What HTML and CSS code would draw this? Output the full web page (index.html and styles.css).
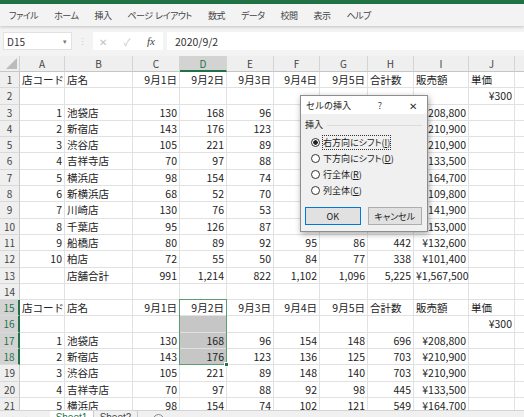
FILE: index.html
```html
<!DOCTYPE html>
<html lang="ja">
<head>
    <meta charset="UTF-8">
    <title>セルの挿入</title>
    <link rel="stylesheet" href="styles.css">
</head>
<body>
    <div class="excel">
        <div class="titlebar"></div>
        <nav class="tabs">
            <span>ファイル</span>
            <span>ホーム</span>
            <span>挿入</span>
            <span class="wide">ページ レイアウト</span>
            <span>数式</span>
            <span>データ</span>
            <span>校閲</span>
            <span>表示</span>
            <span>ヘルプ</span>
        </nav>

        <div class="formula">
            <div class="namebox"><span>D15</span><span class="caret">▾</span></div>
            <div class="grip">⋮</div>
            <div class="fxbox">
                <span class="off">✕</span>
                <span class="off">✓</span>
                <span class="fx">fx</span>
            </div>
            <div class="input">2020/9/2</div>
        </div>

        <div class="sheet" id="sheet"></div>

        <div class="sheetbar">
            <div class="nav"><span>◀</span><span>▶</span></div>
            <div class="tab active">Sheet1</div>
            <div class="tab">Sheet2</div>
            <div class="add"></div>
        </div>

        <div class="dialog">
            <div class="dlg-title">
                <span>セルの挿入</span>
                <span class="help">?</span>
                <span class="close">✕</span>
            </div>
            <div class="dlg-body">
                <div class="group-label">挿入</div>
                <ul class="options">
                    <li><span class="radio checked"></span><span class="focus">右方向にシフト(<u>I</u>)</span></li>
                    <li><span class="radio"></span><span>下方向にシフト(<u>D</u>)</span></li>
                    <li><span class="radio"></span><span>行全体(<u>R</u>)</span></li>
                    <li><span class="radio"></span><span>列全体(<u>C</u>)</span></li>
                </ul>
                <div class="buttons">
                    <button class="ok">OK</button>
                    <button class="cancel">キャンセル</button>
                </div>
            </div>
        </div>
    </div>

    <script>
        const cols = ['A', 'B', 'C', 'D', 'E', 'F', 'G', 'H', 'I', 'J', 'K'];
        const head = ['店コード', '店名', '9月1日', '9月2日', '9月3日', '9月4日', '9月5日', '合計数', '販売額', '単価'];
        const price = ['', '', '', '', '', '', '', '', '', '¥300'];
        const shops = [
            ['1', '池袋店', '130', '168', '96', '154', '148', '696', '¥208,800'],
            ['2', '新宿店', '143', '176', '123', '136', '125', '703', '¥210,900'],
            ['3', '渋谷店', '105', '221', '89', '148', '140', '703', '¥210,900'],
            ['4', '吉祥寺店', '70', '97', '88', '92', '98', '445', '¥133,500'],
            ['5', '横浜店', '98', '154', '74', '102', '121', '549', '¥164,700'],
            ['6', '新横浜店', '68', '52', '70', '90', '86', '366', '¥109,800'],
            ['7', '川崎店', '130', '76', '53', '110', '104', '473', '¥141,900'],
            ['8', '千葉店', '95', '126', '87', '98', '104', '510', '¥153,000'],
            ['9', '船橋店', '80', '89', '92', '95', '86', '442', '¥132,600'],
            ['10', '柏店', '72', '55', '50', '84', '77', '338', '¥101,400']
        ];
        const total = ['', '店舗合計', '991', '1,214', '822', '1,102', '1,096', '5,225', '¥1,567,500'];

        const data = [head, price, ...shops, total, [], head, price, ...shops.slice(0, 5)];

        const sheet = document.getElementById('sheet');

        function cell(text, cls) {
            const d = document.createElement('div');
            d.className = cls;
            d.textContent = text;
            sheet.appendChild(d);
        }

        cell('', 'corner');
        cols.forEach(c => cell(c, c === 'D' ? 'ch hi' : 'ch'));

        data.forEach((row, i) => {
            const n = i + 1;
            cell(n, n >= 15 && n <= 18 ? 'rh hi' : 'rh');
            for (let j = 0; j < cols.length; j++) {
                const v = row[j] || '';
                let cls = 'c';
                if (/^[\d¥]/.test(v)) cls += ' r';
                if (j === 3 && n >= 16 && n <= 18) cls += ' sel';
                cell(v, cls);
            }
        });

        // selection box D15:D18
        const box = document.createElement('div');
        box.className = 'selbox';
        sheet.appendChild(box);
    </script>
</body>
</html>
```

FILE: styles.css
```css
body {
    margin: 0;
    font-family: "Noto Sans CJK JP", "Noto Sans", sans-serif;
    color: #262626;
}

.excel {
    position: relative;
    width: 524px;
    height: 417px;
    overflow: hidden;
    display: flex;
    flex-direction: column;
    background: #fff;
}

.titlebar {
    height: 4px;
    flex-shrink: 0;
    background: #217346;
}

.tabs {
    position: relative;
    z-index: 1;
    height: 22px;
    flex-shrink: 0;
    display: flex;
    align-items: center;
    gap: 16px;
    padding-left: 9px;
    background: #f3f3f3;
    box-shadow: 0 1px 3px rgba(0, 0, 0, .2);
    font-size: 9px;
    letter-spacing: -.5px;
    color: #444;
    font-feature-settings: "palt";
}

.tabs .wide {
    word-spacing: 1px;
}

/* formula bar */
.formula {
    height: 30px;
    flex-shrink: 0;
    display: flex;
    align-items: center;
    padding-left: 3px;
    background: #f3f3f3;
}

.namebox {
    width: 69px;
    height: 18px;
    box-sizing: border-box;
    display: flex;
    align-items: center;
    justify-content: space-between;
    padding: 0 4px 0 3px;
    background: #fff;
    border: 1px solid #e2e2e2;
    font-size: 10px;
    color: #333;
}

.namebox .caret {
    font-size: 7px;
    color: #777;
}

.grip {
    width: 21px;
    text-align: center;
    font-size: 9px;
    color: #c8c8c8;
}

.fxbox {
    width: 70px;
    height: 18px;
    display: flex;
    align-items: center;
    gap: 4px;
    background: #fff;
}

.fxbox span {
    width: 20px;
    text-align: center;
    font-size: 10px;
}

.fxbox .off {
    color: #c2c2c2;
}

.fxbox .fx {
    font-family: "Liberation Serif", serif;
    font-style: italic;
    font-size: 11px;
    color: #444;
}

.input {
    flex: 1;
    height: 18px;
    margin-left: 4px;
    padding-left: 8px;
    display: flex;
    align-items: center;
    background: #fff;
    font-size: 10.5px;
    color: #333;
}

/* sheet grid */
.sheet {
    position: relative;
    height: 354px;
    flex-shrink: 0;
    overflow: hidden;
    display: grid;
    grid-template-columns: 20px 45px 68px 47px 47px 47px 46px 48px 46px 55px 46px 70px;
    grid-template-rows: 16px;
    grid-auto-rows: 16.3px;
    font-size: 10.5px;
    background: #fff;
}

.sheet > div {
    box-sizing: border-box;
    white-space: nowrap;
    line-height: 15px;
}

.c {
    padding: 0 2px;
    border-right: 1px solid #e1e1e1;
    border-bottom: 1px solid #e1e1e1;
    color: #222;
}

.c.r {
    text-align: right;
}

.c.sel {
    background: #c6c6c6;
}

.corner {
    display: flex;
    justify-content: flex-end;
    align-items: flex-end;
    padding: 0 2px 2px 0;
    background: #efefef;
    border-right: 1px solid #d0d0d0;
    border-bottom: 1px solid #c6c6c6;
}

.corner::after {
    content: "";
    border-style: solid;
    border-width: 0 0 11px 11px;
    border-color: transparent transparent #bcbcbc transparent;
}

.ch {
    text-align: center;
    background: #efefef;
    border-right: 1px solid #d4d4d4;
    border-bottom: 1px solid #c6c6c6;
    font-size: 10px;
    color: #444;
}

.ch.hi {
    background: #d3d3d3;
    color: #217346;
    border-bottom: 2px solid #217346;
}

.rh {
    text-align: center;
    background: #efefef;
    border-right: 1px solid #c6c6c6;
    border-bottom: 1px solid #d9d9d9;
    font-size: 10px;
    color: #444;
}

.rh.hi {
    background: #d3d3d3;
    color: #217346;
    border-right: 2px solid #217346;
}

.selbox {
    position: absolute;
    grid-column: 5 / 6;
    grid-row: 16 / 20;
    top: -1px;
    left: -1px;
    right: 0;
    bottom: 0;
    border: 1px solid #5d9d72;
}

.selbox::after {
    content: "";
    position: absolute;
    right: -3px;
    bottom: -3px;
    width: 3px;
    height: 3px;
    background: #217346;
    border: 1px solid #fff;
}

/* sheet tabs */
.sheetbar {
    flex: 1;
    display: flex;
    align-items: flex-start;
    background: #f0f0f0;
    border-top: 1px solid #d4d4d4;
    font-size: 10px;
}

.nav {
    width: 50px;
    display: flex;
    gap: 11px;
    padding: 3px 0 0 8px;
    box-sizing: border-box;
    font-size: 6px;
    color: #bbb;
}

.tab {
    width: 43px;
    padding-top: 1px;
    text-align: center;
    border-right: 1px solid #c8c8c8;
    color: #444;
    font-family: "Liberation Sans", sans-serif;
}

.tab.active {
    background: #fff;
    color: #217346;
}

.add {
    width: 9px;
    height: 9px;
    margin: 3px 0 0 15px;
    border: 1px solid #888;
    border-radius: 50%;
}

/* insert cells dialog */
.dialog {
    position: absolute;
    left: 300px;
    top: 95px;
    width: 128px;
    height: 137px;
    box-sizing: border-box;
    display: flex;
    flex-direction: column;
    background: #f0f0f0;
    border: 1px solid #8e8e8e;
    box-shadow: 1px 2px 6px rgba(0, 0, 0, .35);
    font-size: 9px;
    color: #1a1a1a;
}

.dlg-title {
    height: 18px;
    display: flex;
    align-items: center;
    padding-left: 5px;
    background: #fff;
}

.help {
    width: 20px;
    margin-left: auto;
    margin-right: 9px;
    text-align: center;
    color: #444;
}

.close {
    width: 28px;
    text-align: center;
    font-size: 10px;
    color: #333;
}

.dlg-body {
    flex: 1;
    display: flex;
    flex-direction: column;
    padding: 4px 5px 0 4px;
}

.group-label {
    display: flex;
    align-items: center;
    gap: 4px;
    line-height: 14px;
}

.group-label::after {
    content: "";
    flex: 1;
    height: 1px;
    background: #dcdcdc;
}

.options {
    list-style: none;
    margin: 2px 0 0;
    padding: 0 0 0 6px;
    font-feature-settings: "palt";
}

.options li {
    height: 16px;
    display: flex;
    align-items: center;
    gap: 3px;
}

.radio {
    width: 9px;
    height: 9px;
    box-sizing: border-box;
    border: 1px solid #333;
    border-radius: 50%;
    background: #fff;
}

.radio.checked {
    background: radial-gradient(circle, #222 0 2px, #fff 2.5px);
}

.focus {
    outline: 1px dotted #333;
    outline-offset: 0;
}

.buttons {
    display: flex;
    gap: 7px;
    margin-top: 9px;
}

.buttons button {
    height: 18px;
    padding: 0;
    background: #e1e1e1;
    border: 1px solid #adadad;
    font-family: inherit;
    font-size: 9px;
    color: #1a1a1a;
    font-feature-settings: "palt";
}

.buttons .ok {
    width: 56px;
    border-color: #0078d7;
}

.buttons .cancel {
    width: 55px;
}
```
